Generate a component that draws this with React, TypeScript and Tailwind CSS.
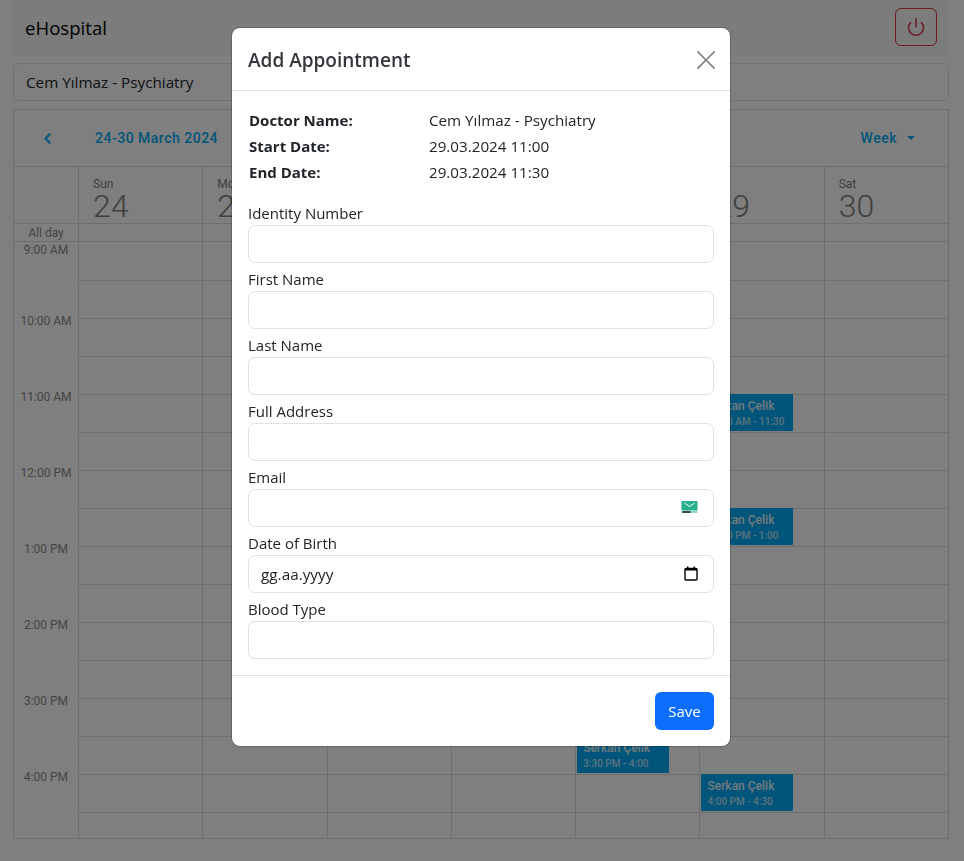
import { ChevronLeft, Power } from "lucide-react";

const days = [
  { name: "Sun", date: 24 },
  { name: "Mon", date: 25 },
  { name: "Tue", date: 26 },
  { name: "Wed", date: 27 },
  { name: "Thu", date: 28 },
  { name: "Fri", date: 29 },
  { name: "Sat", date: 30 },
];

const hours = ["10:00 AM", "11:00 AM", "12:00 PM", "1:00 PM", "2:00 PM", "3:00 PM", "4:00 PM"];

const appointments = [
  { col: 5, row: 4, time: "11:00 AM - 11:30" },
  { col: 5, row: 7, time: "12:30 PM - 1:00" },
  { col: 4, row: 13, time: "3:30 PM - 4:00" },
  { col: 5, row: 14, time: "4:00 PM - 4:30" },
];

const details = [
  { label: "Doctor Name:", value: "Cem Yılmaz - Psychiatry" },
  { label: "Start Date:", value: "29.03.2024 11:00" },
  { label: "End Date:", value: "29.03.2024 11:30" },
];

const fields = ["Identity Number", "First Name", "Last Name", "Full Address"];

const inputClass =
  "block w-full h-[38px] rounded-[7px] border border-[#dee2e6] bg-white px-3 text-[15.3px] text-[#212529] outline-none";

function MailBadge() {
  return (
    <svg width="18" height="14" viewBox="0 0 18 14" className="absolute right-[15px] top-[12px]">
      <rect x="0.5" y="0" width="16" height="9.5" fill="#27b08c" />
      <path d="M3.5 2 8.5 5.5 13.5 2" fill="none" stroke="#ffffff" strokeWidth="1" />
      <rect x="0.5" y="9.5" width="16" height="2.5" fill="#8fd8c4" />
      <rect x="1.5" y="10" width="8" height="2" fill="#37474f" />
    </svg>
  );
}

function CalendarIcon() {
  return (
    <svg width="14" height="15" viewBox="0 0 14 15" className="absolute right-[16px] top-[11px]">
      <rect x="1" y="2.5" width="12" height="11.5" rx="1" fill="#ffffff" stroke="#000000" strokeWidth="1.4" />
      <rect x="1" y="2" width="12" height="2.5" fill="#000000" />
      <rect x="3" y="0.5" width="1.4" height="2" fill="#000000" />
      <rect x="9.6" y="0.5" width="1.4" height="2" fill="#000000" />
    </svg>
  );
}

function Scheduler() {
  return (
    <div className="mt-2 h-[730px] overflow-hidden border border-[#dcdcdc] font-['Roboto',sans-serif]">
      <div className="flex h-[57px] items-center justify-between border-b border-[#dcdcdc] pl-[25px] pr-[33px] text-[14px] font-medium tracking-[0.5px] text-[#03a9f4]">
        <div className="flex items-center">
          <ChevronLeft size={17} strokeWidth={3} />
          <span className="ml-[39px]">24-30 March 2024</span>
        </div>
        <div className="flex items-center">
          <span>Week</span>
          <span className="ml-[10px] h-0 w-0 border-x-[4px] border-t-[4px] border-x-transparent border-t-[#03a9f4]" />
        </div>
      </div>

      <div className="grid h-[57px] grid-cols-[64px_repeat(7,1fr)] border-b border-[#dcdcdc]">
        <div />
        {days.map((day) => (
          <div key={day.name} className="border-l border-[#dcdcdc] pl-[14px] pt-[11px] text-[#808080]">
            <div className="text-[12px] leading-[12px]">{day.name}</div>
            <div className="text-[32px] font-light leading-[32px]">{day.date}</div>
          </div>
        ))}
      </div>

      <div className="grid h-[18px] grid-cols-[64px_repeat(7,1fr)] border-b border-[#dcdcdc]">
        <div className="text-center text-[12px] leading-[18px] text-[#8a8a8a]">All day</div>
        {days.map((day) => (
          <div key={day.name} className="border-l border-[#dcdcdc]" />
        ))}
      </div>

      <div className="flex">
        <div className="w-[64px] shrink-0 pt-px text-center text-[12px] leading-[14px] text-[#8a8a8a]">
          <div className="h-[71px]">9:00 AM</div>
          {hours.map((hour) => (
            <div key={hour} className="h-[76px]">
              {hour}
            </div>
          ))}
        </div>
        <div className="relative grid flex-1 grid-cols-7 auto-rows-[38px]">
          {Array.from({ length: 112 }).map((_, i) => (
            <div
              key={i}
              className={i < 7 ? "border-l border-[#dcdcdc]" : "border-l border-t border-[#dcdcdc]"}
            />
          ))}
          {appointments.map((a) => (
            <div
              key={a.time}
              className="absolute h-[37px] w-[92px] overflow-hidden rounded-[1px] bg-[#03a9f4] pl-[6px] pt-[5px] text-white"
              style={{ left: a.col * 124.29 + 2, top: a.row * 38 }}
            >
              <div className="text-[12px] font-medium leading-[15px] opacity-90">Serkan Çelik</div>
              <div className="whitespace-nowrap text-[10px] font-medium leading-[15px] opacity-70">{a.time}</div>
            </div>
          ))}
        </div>
      </div>
    </div>
  );
}

function AppointmentModal() {
  return (
    <div className="fixed inset-0 bg-black/50">
      <div className="ml-[231px] mt-[27px] w-[500px] rounded-[9px] border border-black/20 bg-white bg-clip-padding text-[#212529]">
        <div className="flex h-[63px] items-center justify-between border-b border-[#dee2e6] px-4 pt-px">
          <h1 className="pt-[2px] text-[19px] font-semibold text-[#33373b]">Add Appointment</h1>
          <svg width="18" height="18" viewBox="0 0 16 16" fill="#000000" fillOpacity="0.5" className="-mr-px">
            <path d="M.293.293a.7.7 0 0 1 1 0L8 7 14.707.293a.7.7 0 1 1 1 1L9 8l6.707 6.707a.7.7 0 0 1-1 1L8 9l-6.707 6.707a.7.7 0 0 1-1-1L7 8 .293 1.293a.7.7 0 0 1 0-1z" />
          </svg>
        </div>

        <div className="px-4 py-4 text-[15px]">
          <div className="pl-px">
            {details.map((item) => (
              <div key={item.label} className="flex h-[26px] items-center">
                <span className="w-[180px] font-bold">{item.label}</span>
                <span className="text-[15.2px]">{item.value}</span>
              </div>
            ))}
          </div>
          <div className="mt-4 flex flex-col gap-[4px]">
            {fields.map((field) => (
              <div key={field}>
                <label className="block leading-6">{field}</label>
                <input className={inputClass} />
              </div>
            ))}
            <div>
              <label className="block leading-6">Email</label>
              <div className="relative">
                <input className={inputClass} type="email" />
                <MailBadge />
              </div>
            </div>
            <div>
              <label className="block leading-6">Date of Birth</label>
              <div className="relative">
                <input className={inputClass} defaultValue="gg.aa.yyyy" />
                <CalendarIcon />
              </div>
            </div>
            <div>
              <label className="block leading-6">Blood Type</label>
              <input className={inputClass} />
            </div>
          </div>
        </div>

        <div className="flex justify-end border-t border-[#dee2e6] px-4 py-4">
          <button className="h-[38px] w-[59px] rounded-[6px] bg-[#0d6efd] text-[15px] text-white">Save</button>
        </div>
      </div>
    </div>
  );
}

export default function App() {
  return (
    <div className="min-h-[861px] bg-white font-['Open_Sans',sans-serif] text-[#212529]">
      <div className="ml-[13px] w-[936px]">
        <nav className="flex h-[55px] items-start justify-between bg-[#f8f9fa] pl-3 pr-3 pt-2">
          <span className="mt-[8px] text-[18.6px] leading-6 text-black">eHospital</span>
          <button className="flex h-[38px] w-[42px] items-center justify-center rounded-[6px] border border-[#dc3545] text-[#dc3545]">
            <Power size={20} strokeWidth={1.8} />
          </button>
        </nav>
        <div className="mt-2 flex h-[38px] items-center rounded-[6px] border border-[#dee2e6] px-3 text-[15.25px]">
          Cem Yılmaz - Psychiatry
        </div>
        <Scheduler />
      </div>
      <AppointmentModal />
    </div>
  );
}
